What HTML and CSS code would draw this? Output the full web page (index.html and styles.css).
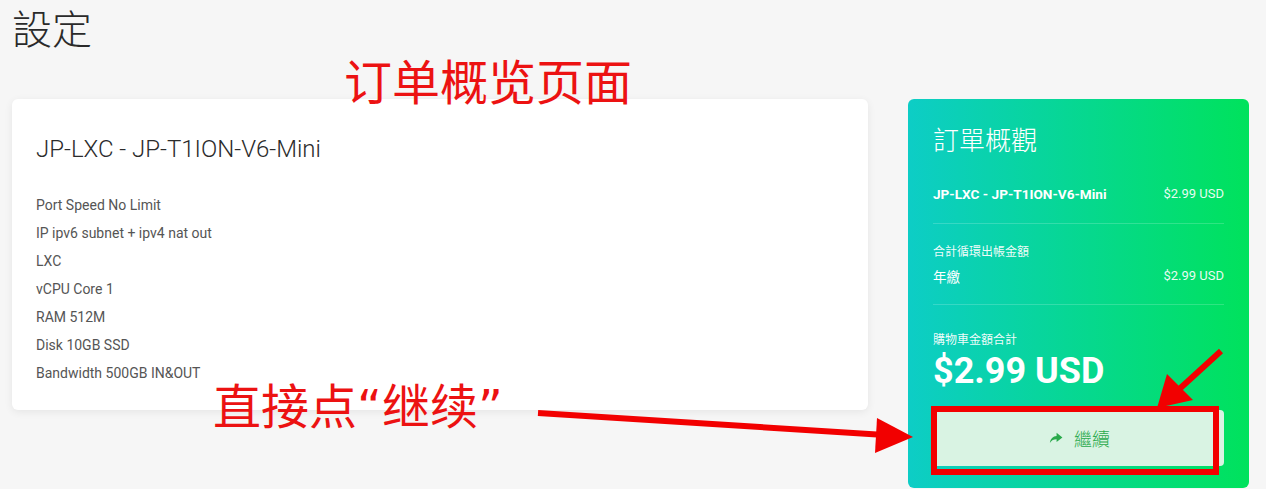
FILE: index.html
```html
<!DOCTYPE html>
<html lang="zh-Hant">
<head>
<meta charset="utf-8">
<title>設定</title>
<link rel="stylesheet" href="styles.css">
</head>
<body>
<div class="page">
  <h1 class="page-title">設定</h1>
  <div class="layout">
    <section class="product-card">
      <h2 class="product-name">JP-LXC - JP-T1ION-V6-Mini</h2>
      <ul class="features">
        <li>Port Speed No Limit</li>
        <li>IP ipv6 subnet + ipv4 nat out</li>
        <li>LXC</li>
        <li>vCPU Core 1</li>
        <li>RAM 512M</li>
        <li>Disk 10GB SSD</li>
        <li>Bandwidth 500GB IN&amp;OUT</li>
      </ul>
    </section>
    <aside class="summary">
      <h2 class="summary-title">訂單概觀</h2>
      <div class="summary-block">
        <div class="summary-row">
          <span class="item-name">JP-LXC - JP-T1ION-V6-Mini</span>
          <span class="price">$2.99 USD</span>
        </div>
      </div>
      <div class="summary-block recurring">
        <div class="small-label">合計循環出帳金額</div>
        <div class="summary-row">
          <span class="cycle">年繳</span>
          <span class="price">$2.99 USD</span>
        </div>
      </div>
      <div class="total">
        <div class="small-label">購物車金額合計</div>
        <div class="total-amount">$2.99 USD</div>
      </div>
      <button class="checkout-btn" type="button">
        <svg class="share-icon" viewBox="0 0 24 24" aria-hidden="true"><path d="M13 3 L23 11 L13 19 V14 C8 14 4.5 15.5 1.5 20.5 C2.5 13 7 9 13 8.5 Z"/></svg>
        <span>繼續</span>
      </button>
    </aside>
  </div>

  <div class="note note-top">订单概览页面</div>
  <div class="note note-bottom">直接点<span class="quote">“</span>继续<span class="quote">”</span></div>
  <div class="highlight"></div>
  <svg class="arrows" viewBox="0 0 1266 489" aria-hidden="true">
    <line x1="538" y1="413" x2="885" y2="435" class="arrow-line"/>
    <polygon points="913,437 877,418 875,453" class="arrow-head"/>
    <line x1="1221" y1="351" x2="1175" y2="393" class="arrow-line"/>
    <polygon points="1157,408 1167,374 1193,400" class="arrow-head"/>
  </svg>
</div>
</body>
</html>
```
FILE: styles.css
```css
* { box-sizing: border-box; }
html, body { margin: 0; padding: 0; }
body {
  background: #f6f6f6;
  font-family: Roboto, "Noto Sans CJK TC", "Noto Sans", sans-serif;
  color: #333;
}
.page {
  position: relative;
  width: 1266px;
  height: 489px;
  overflow: hidden;
  padding: 0 17px 0 12px;
}
.page-title {
  margin: 0;
  padding-top: 1px;
  font-size: 40px;
  line-height: 52px;
  font-weight: 300;
  color: #2a2a2a;
  font-family: "Noto Sans CJK TC", sans-serif;
}
.layout {
  display: grid;
  grid-template-columns: 856px 341px;
  column-gap: 40px;
  align-items: start;
  margin-top: 46px;
}
.product-card {
  background: #fff;
  border-radius: 6px;
  box-shadow: 0 2px 8px rgba(0,0,0,0.07);
  padding: 36px 24px 23px;
  height: 311px;
}
.product-name {
  margin: 0;
  font-size: 24px;
  line-height: 28px;
  font-weight: 300;
  color: #2b2b2b;
}
.features {
  list-style: none;
  margin: 28px 0 0;
  padding: 0;
}
.features li {
  font-size: 14px;
  line-height: 28px;
  color: #555;
}
.summary {
  background: linear-gradient(90deg, #0dcdc6 0%, #00e25c 100%);
  border-radius: 6px;
  height: 389px;
  padding: 25px 25px 21px;
  color: #fff;
  display: flex;
  flex-direction: column;
}
.summary-title {
  margin: 0 0 30px;
  font-size: 26px;
  line-height: 30px;
  font-weight: 300;
  font-family: "Noto Sans CJK TC", sans-serif;
}
.summary-block {
  border-bottom: 1px solid rgba(255,255,255,0.18);
  padding-bottom: 19px;
  margin-bottom: 18px;
}
.summary-block.recurring { padding-bottom: 18px; margin-bottom: 25px; }
.summary-row {
  display: flex;
  justify-content: space-between;
  align-items: center;
  line-height: 20px;
}
.item-name {
  font-size: 13.6px;
  font-weight: 700;
}
.price {
  font-size: 13px;
  color: rgba(255,255,255,0.92);
}
.small-label {
  font-size: 12px;
  line-height: 18px;
  margin-bottom: 6px;
  font-family: "Noto Sans CJK TC", sans-serif;
  color: rgba(255,255,255,0.95);
}
.cycle {
  font-size: 13.5px;
  font-family: "Noto Sans CJK TC", sans-serif;
}
.total .small-label { margin-bottom: 3px; }
.total-amount {
  font-size: 36px;
  line-height: 40px;
  font-weight: 700;
}
.checkout-btn {
  margin-top: 19px;
  height: 56px;
  width: 100%;
  border: 0;
  border-radius: 4px;
  background: #d9f3e3;
  color: #2aaa4c;
  font-size: 18px;
  font-weight: 300;
  font-family: "Noto Sans CJK TC", sans-serif;
  display: flex;
  align-items: center;
  justify-content: center;
  gap: 11px;
  padding: 0 0 0 2px;
}
.share-icon { width: 14px; height: 14px; fill: #2aaa4c; }

.note {
  position: absolute;
  font-family: "Noto Sans CJK SC", sans-serif;
  font-size: 48px;
  line-height: 48px;
  color: #ec1212;
  white-space: nowrap;
}
.note .quote { font-family: "DejaVu Sans", sans-serif; }
.note-top { left: 344px; top: 55px; }
.note-bottom { left: 213px; top: 379px; }
.highlight {
  position: absolute;
  left: 931px;
  top: 406px;
  width: 288px;
  height: 69px;
  border: 6px solid #f20000;
}
.arrows {
  position: absolute;
  left: 0;
  top: 0;
  width: 1266px;
  height: 489px;
}
.arrow-line { stroke: #f20000; stroke-width: 6; }
.arrow-head { fill: #f20000; }
```
